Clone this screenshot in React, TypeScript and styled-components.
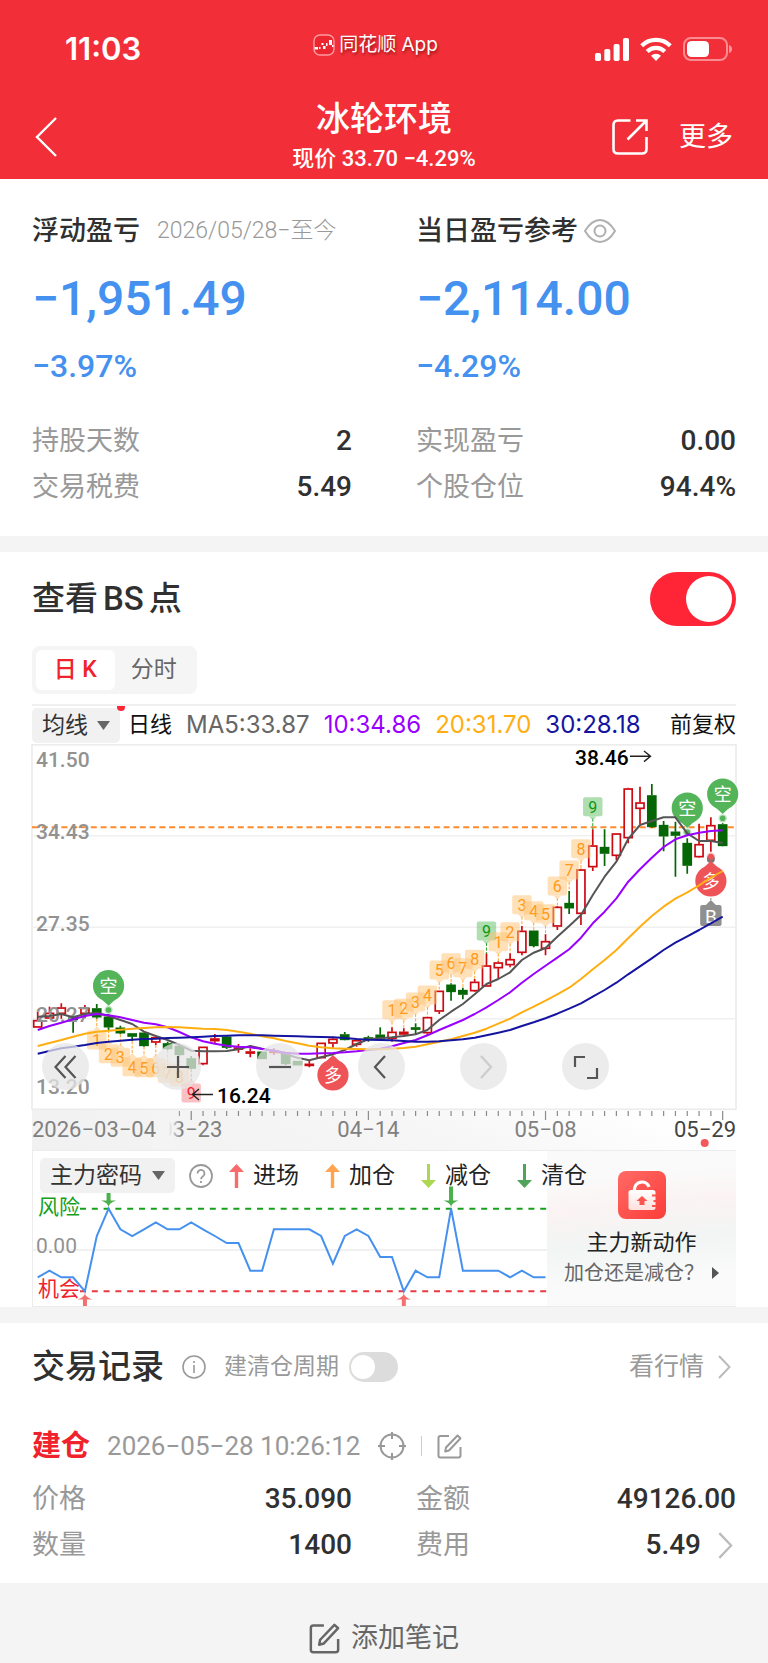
import React from "react";
import styled, { createGlobalStyle } from "styled-components";

const GlobalStyle = createGlobalStyle`
  *, *::before, *::after { box-sizing: border-box; }
  body {
    margin: 0;
    background: #f4f4f4;
    color: #303030;
    font-family: Roboto, "Noto Sans CJK SC", sans-serif;
    font-size: 27px;
  }
  h1, h2, p, dl, dt, dd { margin: 0; }
  button, select, input { font: inherit; color: inherit; margin: 0; }
  button { border: 0; padding: 0; background: none; }
  a { color: inherit; text-decoration: none; }
  svg { display: block; flex: none; }
`;

/* ---------- header ---------- */

const Header = styled.header`
  height: 179px;
  background: #f22f38;
  color: #fff;
`;

const StatusBar = styled.div`
  display: grid;
  grid-template-columns: 1fr auto 1fr;
  align-items: center;
  height: 88px;
  padding: 10px 36px 0 65px;
`;

const Clock = styled.time`
  font-family: Inter, sans-serif;
  font-size: 31px;
  font-weight: 600;
  line-height: 36px;
`;

const AppBadge = styled.div`
  display: flex;
  align-items: center;
  gap: 4px;
  height: 52px;
  margin-right: 46px;
  padding-bottom: 8px;
  font-family: Inter, "Noto Sans CJK SC", sans-serif;
  font-size: 19px;
  line-height: 28px;
  text-shadow: 1px 2px 3px rgba(90, 0, 0, 0.6);
`;

const StatusIcons = styled.div`
  display: flex;
  align-items: center;
  justify-content: flex-end;
  gap: 11px;
`;

const NavBar = styled.div`
  display: grid;
  grid-template-columns: 1fr auto 1fr;
  align-items: center;
  height: 91px;
  padding: 6px 35px 0;
`;

const StockTitle = styled.div`
  text-align: center;
`;

const StockName = styled.h1`
  font-size: 34px;
  font-weight: 500;
  line-height: 48px;
`;

const StockPrice = styled.p`
  font-size: 22px;
  font-weight: 500;
  line-height: 32px;
  padding-bottom: 4px;
`;

const NavActions = styled.div`
  display: flex;
  align-items: center;
  justify-content: flex-end;
  gap: 31px;
`;

const MoreButton = styled.button`
  font-size: 27px;
  line-height: 40px;
`;

/* ---------- shared ---------- */

const Section = styled.section`
  padding: 0 32px;
  margin-bottom: 16px;
  background: #fff;
`;

const Columns = styled.div`
  display: grid;
  grid-template-columns: 1fr 1fr;
  column-gap: 64px;
`;

const DataRow = styled.div`
  display: flex;
  align-items: center;
  justify-content: space-between;
  height: 46px;
`;

const DataLabel = styled.dt`
  color: #999;
  line-height: 40px;
`;

const DataValue = styled.dd`
  display: flex;
  align-items: center;
  gap: 14px;
  font-size: 28px;
  font-weight: 500;
  line-height: 40px;
`;

const SectionTitle = styled.h2`
  display: flex;
  gap: 5px;
  font-size: 33px;
  font-weight: 500;
  line-height: 48px;
`;

const Switch = styled.input<{ $w: number; $h: number; $knob: number; $pad: number }>`
  appearance: none;
  display: flex;
  align-items: center;
  flex: none;
  width: ${(p) => p.$w}px;
  height: ${(p) => p.$h}px;
  padding: 0 ${(p) => p.$pad}px;
  border-radius: ${(p) => p.$h}px;
  background: #dcdcdc;
  &::before {
    content: "";
    width: ${(p) => p.$knob}px;
    height: ${(p) => p.$knob}px;
    border-radius: 50%;
    background: #fff;
  }
  &:checked {
    background: #ff2436;
    justify-content: flex-end;
  }
`;

/* ---------- profit summary ---------- */

const Summary = styled(Section)`
  padding-top: 32px;
  padding-bottom: 26px;
`;

const ProfitHead = styled.div<{ $gap: number }>`
  display: flex;
  align-items: center;
  height: 40px;
  gap: ${(p) => p.$gap}px;
`;

const ProfitTitle = styled.h2`
  font-size: 27px;
  font-weight: 500;
  line-height: 40px;
`;

const DateRange = styled.span`
  color: #999;
  font-size: 23px;
  font-weight: 300;
  line-height: 32px;
`;

const ProfitAmount = styled.p`
  color: #4591f0;
  font-size: 48px;
  font-weight: 500;
  line-height: 64px;
  margin-top: 16px;
`;

const ProfitPercent = styled.p`
  color: #4591f0;
  font-size: 32px;
  font-weight: 500;
  line-height: 40px;
  margin: 15px 0 32px;
`;

/* ---------- chart ---------- */

const ChartSection = styled(Section)`
  padding-top: 20px;
`;

const TitleRow = styled.div`
  display: flex;
  align-items: center;
  justify-content: space-between;
  height: 54px;
`;

const Tabs = styled.div`
  display: flex;
  width: 165px;
  height: 48px;
  margin-top: 20px;
  padding: 4px;
  border-radius: 8px;
  background: #f5f5f5;
`;

const Tab = styled.button<{ $active?: boolean }>`
  flex: 1;
  border-radius: 6px;
  background: ${(p) => (p.$active ? "#fff" : "transparent")};
  color: ${(p) => (p.$active ? "#f0222c" : "#666")};
  font-size: 23px;
  font-weight: ${(p) => (p.$active ? 500 : 400)};
  line-height: 32px;
`;

const LegendRow = styled.div`
  display: flex;
  align-items: center;
  gap: 14px;
  height: 40px;
  margin-top: 10px;
  border-top: 2px solid #f0f0f0;
  font-size: 22px;
  line-height: 32px;
  color: #111;
`;

const PeriodGroup = styled.div`
  display: flex;
  align-items: center;
  gap: 8px;
`;

const Dropdown = styled.div<{ $w: number }>`
  position: relative;
  flex: none;
  width: ${(p) => p.$w}px;
  height: 35px;
  select {
    appearance: none;
    width: 100%;
    height: 100%;
    padding: 0 0 0 10px;
    border: 0;
    border-radius: 5px;
    background: #f1f1f1;
    color: #333;
    font-size: 23px;
    line-height: 35px;
  }
  svg {
    position: absolute;
    right: 10px;
    top: 13px;
    pointer-events: none;
  }
`;

const NewDot = styled.i`
  position: absolute;
  right: -5px;
  top: -2px;
  width: 8px;
  height: 5px;
  border-radius: 0 0 5px 5px;
  background: #ff2436;
`;

const MaText = styled.span<{ $color: string }>`
  color: ${(p) => p.$color};
  font-family: Inter, sans-serif;
  font-size: 24px;
`;

const LegendEnd = styled.span`
  margin-left: auto;
`;

const ChartBox = styled.div`
  position: relative;
  svg.plot { width: 100%; height: auto; overflow: visible; }
`;

const ChartControls = styled.div`
  position: absolute;
  left: 10px;
  bottom: 60px;
  display: flex;
  gap: 55px;
`;

const RoundButton = styled.button`
  display: grid;
  place-items: center;
  width: 47px;
  height: 47px;
  border-radius: 50%;
  background: rgba(230, 230, 230, 0.75);
  &:first-child { margin-right: 10px; }
`;

const Indicator = styled.div`
  position: relative;
  display: flex;
  border: 1px solid #ececec;
  border-width: 1px 0 1px 1px;
  svg.line { flex: 1 1 0; min-width: 0; height: auto; }
`;

const IndicatorLegend = styled.div`
  position: absolute;
  left: 7px;
  top: 7px;
  display: flex;
  align-items: center;
  gap: 16px;
  height: 35px;
  font-size: 23px;
  line-height: 34px;
  color: #222;
`;

const Signals = styled.div`
  display: flex;
  gap: 26px;
`;

const SignalItem = styled.span`
  display: flex;
  align-items: center;
  gap: 9px;
`;

const HelpGroup = styled.div`
  display: flex;
  align-items: center;
  gap: 14px;
`;

const Promo = styled.a`
  display: flex;
  flex-direction: column;
  align-items: center;
  width: 189px;
  padding-top: 20px;
  background: linear-gradient(175deg, #fafafa 18%, #fbf3f3 36%, #f1f5f4 58%, #fafafa 80%);
  color: #222;
  font-size: 22px;
  line-height: 32px;
`;

const PromoTitle = styled.span`
  margin-top: 8px;
`;

const PromoHint = styled.span`
  display: flex;
  align-items: center;
  gap: 8px;
  color: #666;
  font-size: 20px;
  line-height: 28px;
`;

/* ---------- trades ---------- */

const Trades = styled(Section)`
  padding-top: 20px;
  padding-bottom: 15px;
  margin-bottom: 0;
`;

const TradesHead = styled.div`
  display: flex;
  align-items: center;
  height: 48px;
`;

const InfoIcon = styled.span`
  margin: 0 18px;
`;

const CycleLabel = styled.label`
  display: flex;
  align-items: center;
  gap: 10px;
  color: #999;
  font-size: 23px;
  line-height: 32px;
`;

const QuoteLink = styled.a`
  display: flex;
  align-items: center;
  gap: 14px;
  margin-left: auto;
  padding-right: 5px;
  color: #999;
  font-size: 25px;
  line-height: 36px;
`;

const TradeHead = styled.div`
  display: flex;
  align-items: center;
  height: 40px;
  margin: 35px 0 10px;
  color: #999;
`;

const TradeKind = styled.strong`
  color: #f0222c;
  font-size: 29px;
  font-weight: 700;
  line-height: 40px;
`;

const TradeTime = styled.time`
  margin: 0 18px 0 17px;
  font-size: 26px;
  line-height: 40px;
`;

const Separator = styled.i`
  width: 1px;
  height: 20px;
  margin: 0 15px;
  background: #ccc;
`;

const NoteBar = styled.footer`
  display: flex;
  justify-content: center;
  padding: 32px 0 2px;
  color: #666;
`;

const NoteButton = styled.button`
  display: flex;
  align-items: center;
  gap: 11px;
  line-height: 46px;
`;

/* ---------- chart data ---------- */

const STEP = 11.81;
const cx = (i: number) => 5.7 + STEP * i;
const cy = (v: number) => 196 + v / 3;

// [rising, high, bodyTop, bodyBottom, low]
const CANDLES: [number, number, number, number, number][] = [
  [1, 215, 240, 263, 263], [1, 200, 218, 236, 236], [1, 190, 202, 222, 236], [0, 230, 232, 240, 278],
  [1, 195, 203, 222, 235], [0, 192, 205, 232, 236], [0, 222, 230, 262, 270], [0, 257, 263, 280, 283],
  [0, 280, 280, 290, 303], [0, 278, 278, 318, 320], [1, 287, 291, 308, 315], [0, 305, 310, 327, 330],
  [0, 316, 318, 345, 347], [0, 348, 355, 386, 388], [1, 320, 320, 373, 376], [1, 282, 295, 304, 310],
  [0, 288, 290, 323, 327], [1, 312, 322, 328, 338], [1, 325, 334, 340, 352], [0, 335, 335, 357, 357],
  [1, 325, 332, 338, 345], [0, 338, 342, 372, 375], [0, 363, 363, 376, 376], [1, 362, 371, 376, 382],
  [1, 308, 308, 355, 355], [1, 290, 296, 311, 323], [0, 276, 283, 300, 301], [1, 297, 300, 315, 320],
  [0, 287, 292, 298, 305], [0, 262, 284, 298, 298], [1, 262, 275, 297, 305], [1, 265, 275, 284, 290],
  [0, 250, 262, 268, 282], [1, 231, 231, 280, 285], [1, 152, 152, 215, 222], [0, 130, 134, 156, 182],
  [0, 143, 150, 164, 178], [1, 117, 125, 154, 156], [1, 40, 76, 140, 141], [1, 64, 67, 85, 115],
  [1, 40, 57, 76, 82], [1, -42, -28, 39, 46], [0, -28, -28, 18, 22], [1, -17, 3, 27, 46],
  [1, -102, -100, -40, -30], [0, -147, -111, -95, -78], [1, -214, -212, -78, -45], [1, -332, -284, -218, -207],
  [0, -332, -279, -259, -222], [1, -321, -320, -252, -239], [1, -457, -455, -305, -290], [1, -460, -413, -393, -347],
  [0, -468, -434, -339, -337], [0, -357, -345, -311, -266], [0, -355, -325, -313, -190], [0, -305, -291, -223, -199],
  [1, -349, -288, -248, -247], [1, -368, -345, -297, -265], [0, -350, -347, -282, -281],
];

const MA = [
  { color: "#555", v: [230, 228, 222, 232, 222, 218, 228, 240, 252, 275, 288, 300, 315, 332, 334, 334, 333, 328, 318, 326, 332, 343, 353, 361, 352, 343, 330, 312, 298, 295, 292, 288, 283, 270, 240, 215, 192, 163, 132, 117, 97, 60, 38, 24, -10, -42, -75, -135, -190, -235, -303, -345, -357, -368, -368, -320, -297, -297, -291] },
  { color: "#9a00ff", v: [270, 258, 248, 238, 228, 222, 226, 232, 240, 248, 253, 262, 276, 292, 304, 311, 317, 320, 322, 327, 332, 338, 341, 341, 340, 339, 337, 334, 330, 326, 319, 309, 300, 286, 270, 255, 240, 222, 202, 180, 157, 128, 102, 77, 53, 28, -7, -50, -85, -125, -175, -212, -247, -279, -302, -314, -322, -327, -329] },
  { color: "#ffae12", v: [318, 309, 300, 290, 281, 275, 272, 269, 266, 264, 262, 261, 262, 264, 266, 267, 270, 275, 281, 289, 295, 303, 310, 317, 322, 325, 326, 327, 328, 328, 326, 324, 320, 313, 305, 298, 288, 278, 266, 251, 236, 217, 200, 182, 163, 143, 117, 88, 60, 30, -5, -40, -72, -100, -124, -143, -164, -187, -207] },
  { color: "#1414a0", v: [341, 333, 325, 320, 315, 309, 305, 302, 299, 297, 296, 294, 293, 292, 290, 288, 287, 286, 286, 286, 287, 288, 289, 290, 291, 292, 294, 297, 299, 300, 301, 303, 305, 305, 304, 301, 298, 293, 286, 278, 270, 258, 247, 235, 221, 206, 190, 170, 150, 128, 103, 79, 55, 30, 8, -11, -30, -50, -70] },
];

type Tone = "orange" | "green" | "red";
// [candle, number, centre, tone]
const TAGS: [number, number, number, Tone][] = [
  [5, 1, 300, "orange"], [6, 2, 341, "orange"], [7, 3, 352, "orange"], [8, 4, 380, "orange"],
  [9, 5, 383, "orange"], [10, 6, 383, "orange"], [11, 7, 400, "orange"], [12, 8, 411, "orange"], [13, 9, 459, "red"],
  [30, 1, 209, "orange"], [31, 2, 205, "orange"], [32, 3, 186, "orange"], [33, 4, 165, "orange"],
  [34, 5, 90, "orange"], [35, 6, 68, "orange"], [36, 7, 83, "orange"], [37, 8, 58, "orange"], [38, 9, -27, "green"],
  [39, 1, 5, "orange"], [40, 2, -25, "orange"], [41, 3, -106, "orange"], [42, 4, -88, "orange"], [43, 5, -79, "orange"],
  [44, 6, -162, "orange"], [45, 7, -210, "orange"], [46, 8, -274, "orange"], [47, 9, -400, "green"],
];
const TONES: Record<Tone, { fill: string; text: string }> = {
  orange: { fill: "#ffc476", text: "#ff9a1a" },
  green: { fill: "#68c06a", text: "#0a9a10" },
  red: { fill: "#f78a92", text: "#f0222c" },
};

const PRICES: [string, number][] = [["41.50", 23], ["34.43", 95], ["27.35", 187], ["20.27", 278], ["13.20", 350]];
const FORCE = [412, 392, 412, 412, 454, 288, 206, 268, 288, 268, 247, 268, 268, 247, 268, 288, 309, 309, 392, 392, 268, 268, 268, 268, 288, 371, 288, 268, 288, 351, 351, 454, 392, 412, 412, 206, 392, 392, 392, 392, 412, 392, 412, 412];

const poly = (v: number[], y: (n: number) => number) =>
  v.map((n, i) => `${cx(i).toFixed(1)},${y(n).toFixed(1)}`).join(" ");

/* ---------- drawings ---------- */

const Candle = ({ i }: { i: number }) => {
  const [up, hi, top, bot, lo] = CANDLES[i];
  const x = cx(i);
  const c = up ? "#cc0a12" : "#056605";
  const bodyH = Math.max((bot - top) / 3, 2);
  return (
    <g stroke={c} strokeWidth="1.7" fill={up ? "#fff" : c}>
      <path d={`M${x} ${cy(hi)}V${cy(top)}M${x} ${cy(bot)}V${cy(lo)}`} />
      <rect x={x - 4} y={cy(top) + 0.7} width="8" height={Math.max(bodyH - 1.4, 1)} />
    </g>
  );
};

const Tag = ({ i, n, v, tone }: { i: number; n: number; v: number; tone: Tone }) => {
  const x = cx(i);
  const y = cy(v);
  const t = TONES[tone];
  const below = i < 20;
  const [, hi, , , lo] = CANDLES[i];
  return (
    <g>
      <path
        d={below ? `M${x} ${cy(lo)}V${y - 12}` : `M${x} ${y + 12}V${cy(hi)}`}
        stroke={t.text} strokeDasharray="3 1.5" opacity="0.9"
      />
      <g fill={t.fill} opacity="0.52">
        <rect x={x - 9.7} y={y - 9.5} width="19.4" height="19" rx="2" />
        <path d={below ? `M${x - 4} ${y - 9.5}l4-4 4 4z` : `M${x - 4} ${y + 9.5}l4 4 4-4z`} />
      </g>
      <text x={x} y={y + 6} textAnchor="middle" fontSize="16" fill={t.text}>{n}</text>
    </g>
  );
};

const Pin = ({ i, v, dot, short }: { i: number; v: number; dot?: number; short?: boolean }) => {
  const x = cx(i);
  const y = cy(v);
  const c = short ? "#54b45a" : "#ee5357";
  const s = short ? 1 : -1;
  return (
    <g fill={c}>
      <circle cx={x} cy={y} r="15.6" />
      <path d={`M${x - 7} ${y + s * 13.5}L${x} ${y + s * 20}L${x + 7} ${y + s * 13.5}z`} />
      {dot !== undefined && (
        <>
          <circle cx={x} cy={cy(dot)} r="4.2" opacity="0.35" />
          <circle cx={x} cy={cy(dot)} r="2.8" />
        </>
      )}
      <text x={x} y={y + 7} textAnchor="middle" fontSize="18" fill="#fff">{short ? "空" : "多"}</text>
    </g>
  );
};

const PriceChart = () => (
  <svg className="plot" viewBox="0 0 704 406" role="img" aria-label="日K">
    <defs>
      <linearGradient id="axis" x1="0" x2="1" y1="1" y2="0.86">
        <stop offset="0" stopColor="#f1f1f1" />
        <stop offset="0.6" stopColor="#f6f6f6" />
        <stop offset="1" stopColor="#fff" />
      </linearGradient>
      <linearGradient id="fade">
        <stop offset="0.55" stopColor="#f4f4f4" />
        <stop offset="1" stopColor="#f4f4f4" stopOpacity="0" />
      </linearGradient>
    </defs>
    <rect y="365" width="704" height="41" fill="url(#axis)" />
    <g stroke="#ececec" strokeWidth="1.6" fill="none">
      <rect x="0" y="0.8" width="704" height="364.5" />
      <path d="M0 91.7H704M0 183.3H704M0 274.7H704" stroke="#f0f0f0" />
    </g>
    <path d="M0 83.3H704" stroke="#ff8a2b" strokeWidth="2" strokeDasharray="6 3.8" />
    {CANDLES.map((_, i) => <Candle key={i} i={i} />)}
    <g fontSize="21" fontWeight="500" fill="#929292">
      {PRICES.map(([t, y]) => <text key={t} x="4" y={y}>{t}</text>)}
    </g>
    {TAGS.map(([i, n, v, tone]) => <Tag key={i} i={i} n={n} v={v} tone={tone} />)}
    <Pin i={6} v={137} dot={210} short />
    <Pin i={25} v={405} />
    <Pin i={55} v={-396} dot={-323} short />
    <Pin i={58} v={-438} dot={-365} short />
    <circle cx={cx(57)} cy="115" r="4" fill="#777" />
    <Pin i={57} v={-177} dot={-250} />
    <path d={`M${cx(57)} 154v7`} stroke="#888" strokeDasharray="2 2" />
    <g fill="#8f8f8f">
      <rect x={cx(57) - 10.7} y="161" width="21.4" height="21" rx="2" />
      <path d={`M${cx(57) - 5} 161l5-5 5 5z`} />
    </g>
    <text x={cx(57)} y="178.5" textAnchor="middle" fontSize="19" fill="#fff">B</text>
    {MA.map((m) => (
      <polyline key={m.color} points={poly(m.v, cy)} fill="none" stroke={m.color} strokeWidth="2" strokeLinejoin="round" />
    ))}
    <g fontSize="21" fontWeight="500" fill="#000">
      <text x="543" y="21">38.46</text>
      <text x="185" y="359">16.24</text>
    </g>
    <g fill="none" stroke="#222" strokeWidth="1.4">
      <path d="M598 12.3H618M612 7l6.5 5.3-6.5 5.3" />
      <path d="M181 350.5H161M167 345l-6.5 5.5 6.5 5.5" />
    </g>
    <path
      d={CANDLES.map((_, i) => (i < 11 ? "" : `M${cx(i)} 367v${(i - 13) % 15 ? 5 : 9}`)).join("")}
      stroke="#8a8a8a" strokeWidth="1.2"
    />
    <g fontSize="22" fill="#808080">
      <text x={cx(13)} y="393" textAnchor="middle">03−23</text>
      <rect x="120" y="367" width="30" height="38" fill="url(#fade)" />
      <text x="0" y="393">2026−03−04</text>
      <text x={cx(28)} y="393" textAnchor="middle">04−14</text>
      <text x={cx(43)} y="393" textAnchor="middle">05−08</text>
      <text x="704" y="393" textAnchor="end" fill="#444">05−29</text>
    </g>
    <circle cx="672.7" cy="399" r="4" fill="#f4585c" />
  </svg>
);

const fy = (n: number) => n / 3 - 11;

const SignalMark = ({ i, up }: { i: number; up?: boolean }) => {
  const x = cx(i);
  return up ? (
    <path d={`M${x - 7.5} 148.5q7.5-2.5 7.5-7q0 4.5 7.5 7h-5.5v7.5h-4v-7.5z`} fill="#f4706f" />
  ) : (
    <path d={`M${x - 7.5} 49.5q7.5 2.5 7.5 7q0-4.5 7.5-7h-5.5V35.5h-4v14z`} fill="#4ab04c" />
  );
};

const ForceChart = () => (
  <svg className="line" viewBox="1 0 514 155" role="img" aria-label="主力密码">
    <path d="M0 99H515" stroke="#ececec" strokeWidth="1.6" />
    <path d="M48 57.7H515" stroke="#16a01c" strokeWidth="2" strokeDasharray="6 5.8" />
    <path d="M48 140.3H515" stroke="#e93a42" strokeWidth="2" strokeDasharray="6 5.8" />
    <text x="6" y="63" fontSize="21" fill="#16a01c">风险</text>
    <text x="4" y="102" fontSize="21" fill="#929292">0.00</text>
    <text x="6" y="145" fontSize="21" fill="#f0222c">机会</text>
    <polyline points={poly(FORCE, fy)} fill="none" stroke="#4591f0" strokeWidth="2" />
    <SignalMark i={6} />
    <SignalMark i={35} />
    <SignalMark i={4} up />
    <SignalMark i={31} up />
  </svg>
);

const Caret = () => (
  <svg width="13" height="9" viewBox="0 0 13 9"><path d="M0 0h13L6.5 9z" fill="#666" /></svg>
);

const Chevron = ({ w = 13, h = 24, color = "#bbb" }) => (
  <svg width={w} height={h} viewBox="0 0 13 24" fill="none" stroke={color} strokeWidth="2">
    <path d="M1 1l10.5 11L1 23" />
  </svg>
);

const EditIcon = ({ size = 25, sw = 2 }) => (
  <svg width={size} height={size} viewBox="0 0 25 25" fill="none" stroke="currentColor" strokeWidth={sw} strokeLinejoin="round">
    <path d="M12 2H3.5Q1.5 2 1.5 4v17.5q0 2 2 2h18q2 0 2-2V13" />
    <path d="M20.5 1.5l3 2.7L12 16.5l-3.8 1 .8-4z" />
  </svg>
);

const SignalArrow = ({ color, up }: { color: string; up?: boolean }) => (
  <svg width="15" height="24" viewBox="0 0 15 24" fill={color}>
    {up ? <path d="M7.5 0L15 8H9.2v16H5.8V8H0z" /> : <path d="M7.5 24L15 16H9V0H6v16H0z" />}
  </svg>
);

const SIGNALS = [
  { label: "进场", color: "#f76b6b", up: true },
  { label: "加仓", color: "#ffa552", up: true },
  { label: "减仓", color: "#add652", up: false },
  { label: "清仓", color: "#52a35a", up: false },
];

const ctl = { width: 26, height: 26, viewBox: "0 0 26 26", fill: "none", strokeWidth: 2.2 };

const Data = ({ label, value, more }: { label: string; value: string; more?: boolean }) => (
  <DataRow>
    <DataLabel>{label}</DataLabel>
    <DataValue>
      {value}
      {more && <Chevron w={21} h={27} />}
    </DataValue>
  </DataRow>
);

export default function App() {
  return (
    <>
      <GlobalStyle />
      <Header>
        <StatusBar>
          <Clock>11:03</Clock>
          <AppBadge>
            <svg width="22" height="22" viewBox="0 0 22 22">
              <rect x="1" y="1" width="20" height="20" rx="6" fill="#ec2630" stroke="#ff9ba0" strokeWidth="1.4" />
              <path d="M1.5 13h3.500v2.500h-3.500zM6 13h1.500v2H6zM8.500 9h2v2h-2zM10 12h2.500v3H10zM13 9h1.500v3H13zM16 6h3v5h-3zM19 11h1.500v2H19z" fill="#fff" />
            </svg>
            同花顺 App
          </AppBadge>
          <StatusIcons>
            <svg width="34" height="23" viewBox="0 0 34 23" fill="#fff">
              <rect y="15" width="6" height="8" rx="1.8" />
              <rect x="9.3" y="11" width="6" height="12" rx="1.8" />
              <rect x="18.6" y="6" width="6" height="17" rx="1.8" />
              <rect x="28" width="6" height="23" rx="1.8" />
            </svg>
            <svg width="32" height="24" viewBox="0 0 32 24" fill="none" stroke="#fff" strokeWidth="4.2">
              <path d="M1.7 8.7a20.5 20.5 0 0 1 28.6 0" />
              <path d="M7.2 14.5a12.5 12.5 0 0 1 17.6 0" />
              <path d="M16 24l-5-5.3a7.5 7.5 0 0 1 10 0z" fill="#fff" stroke="none" />
            </svg>
            <svg width="49" height="24" viewBox="0 0 49 24">
              <rect x="1" y="1" width="43" height="22" rx="7" fill="none" stroke="#fff" strokeOpacity="0.45" strokeWidth="2" />
              <rect x="4" y="4" width="22" height="16" rx="4.5" fill="#fff" />
              <path d="M46 8q3 1 3 4t-3 4z" fill="#fff" fillOpacity="0.5" />
            </svg>
          </StatusIcons>
        </StatusBar>
        <NavBar>
          <button aria-label="返回">
            <svg width="22" height="40" viewBox="0 0 22 40" fill="none" stroke="#fff" strokeWidth="2.4">
              <path d="M21 1L2 20l19 19" />
            </svg>
          </button>
          <StockTitle>
            <StockName>冰轮环境</StockName>
            <StockPrice>现价 33.70 −4.29%</StockPrice>
          </StockTitle>
          <NavActions>
            <button aria-label="分享">
              <svg width="36" height="36" viewBox="0 0 36 36" fill="none" stroke="#fff" strokeWidth="2.6">
                <path d="M18.5 1.5H6Q1.5 1.5 1.5 6v24q0 4.5 4.5 4.5h24q4.5 0 4.5-4.5V18" />
                <path d="M24 1.5h10.5V12M34 2L15.5 20.5" />
              </svg>
            </button>
            <MoreButton>更多</MoreButton>
          </NavActions>
        </NavBar>
      </Header>

      <main>
        <Summary>
          <Columns>
            <div>
              <ProfitHead $gap={17}>
                <ProfitTitle>浮动盈亏</ProfitTitle>
                <DateRange>2026/05/28−至今</DateRange>
              </ProfitHead>
              <ProfitAmount>−1,951.49</ProfitAmount>
              <ProfitPercent>−3.97%</ProfitPercent>
              <dl>
                <Data label="持股天数" value="2" />
                <Data label="交易税费" value="5.49" />
              </dl>
            </div>
            <div>
              <ProfitHead $gap={6}>
                <ProfitTitle>当日盈亏参考</ProfitTitle>
                <button aria-label="隐藏金额">
                  <svg width="32" height="24" viewBox="0 0 32 24" fill="none" stroke="#b0b0b0" strokeWidth="2">
                    <path d="M1 12Q7.5 1 16 1t15 11q-6.5 11-15 11T1 12z" />
                    <circle cx="16" cy="12" r="5.5" />
                  </svg>
                </button>
              </ProfitHead>
              <ProfitAmount>−2,114.00</ProfitAmount>
              <ProfitPercent>−4.29%</ProfitPercent>
              <dl>
                <Data label="实现盈亏" value="0.00" />
                <Data label="个股仓位" value="94.4%" />
              </dl>
            </div>
          </Columns>
        </Summary>

        <ChartSection>
          <TitleRow>
            <SectionTitle as="label" htmlFor="bs">
              <span>查看</span>
              <span>BS</span>
              <span>点</span>
            </SectionTitle>
            <Switch id="bs" type="checkbox" role="switch" defaultChecked $w={86} $h={54} $knob={46} $pad={4} />
          </TitleRow>
          <Tabs role="tablist">
            <Tab role="tab" aria-selected $active>日 K</Tab>
            <Tab role="tab">分时</Tab>
          </Tabs>
          <LegendRow>
            <PeriodGroup>
              <Dropdown $w={88}>
                <select aria-label="指标"><option>均线</option></select>
                <Caret />
                <NewDot />
              </Dropdown>
              日线
            </PeriodGroup>
            <MaText $color="#666">MA5:33.87</MaText>
            <MaText $color="#9a00ff">10:34.86</MaText>
            <MaText $color="#ffae12">20:31.70</MaText>
            <MaText $color="#1414a0">30:28.18</MaText>
            <LegendEnd>前复权</LegendEnd>
          </LegendRow>
          <ChartBox>
            <PriceChart />
            <ChartControls>
              <RoundButton aria-label="最早">
                <svg {...ctl} stroke="#555"><path d="M12.5 2L2.5 13l10 11M22.5 2l-10 11 10 11" /></svg>
              </RoundButton>
              <RoundButton aria-label="放大">
                <svg {...ctl} stroke="#555"><path d="M13 2v22M2 13h22" /></svg>
              </RoundButton>
              <RoundButton aria-label="缩小">
                <svg {...ctl} stroke="#555"><path d="M2 13h22" /></svg>
              </RoundButton>
              <RoundButton aria-label="向前">
                <svg {...ctl} stroke="#555"><path d="M16 2L6 13l10 11" /></svg>
              </RoundButton>
              <RoundButton aria-label="向后">
                <svg {...ctl} stroke="#ccc"><path d="M10 2l10 11-10 11" /></svg>
              </RoundButton>
              <RoundButton aria-label="全屏">
                <svg {...ctl} stroke="#555"><path d="M2 13V3h10M14 24h10V14" /></svg>
              </RoundButton>
            </ChartControls>
          </ChartBox>
          <Indicator>
            <ForceChart />
            <Promo href="#force">
              <svg width="48" height="48" viewBox="0 0 48 48">
                <defs>
                  <linearGradient id="lock" x2="1" y2="1">
                    <stop stopColor="#ff6a66" />
                    <stop offset="1" stopColor="#fb3d38" />
                  </linearGradient>
                  <linearGradient id="body" x2="0" y2="1">
                    <stop stopColor="#fff" />
                    <stop offset="1" stopColor="#ffe0dc" />
                  </linearGradient>
                </defs>
                <rect width="48" height="48" rx="8" fill="url(#lock)" />
                <path d="M16.5 20v-2.5a7.5 7.5 0 0 1 14.5-1.5" fill="none" stroke="#fff" strokeWidth="3.2" />
                <rect x="10.5" y="19" width="27" height="20" rx="2.5" fill="url(#body)" />
                <path d="M24 25l5.5 5h-3v4h-5v-4h-3zM34 23.5h4v2h-4zM35.5 29h2.5v2h-2.5zM34 34h4v2h-4z" fill="#fb5550" />
              </svg>
              <PromoTitle>主力新动作</PromoTitle>
              <PromoHint>
                加仓还是减仓？
                <svg width="7" height="12" viewBox="0 0 7 12"><path d="M0 0l7 6-7 6z" fill="#555" /></svg>
              </PromoHint>
            </Promo>
            <IndicatorLegend>
              <HelpGroup>
                <Dropdown $w={135}>
                  <select aria-label="副图指标"><option>主力密码</option></select>
                  <Caret />
                </Dropdown>
                <button aria-label="说明">
                  <svg width="24" height="24" viewBox="0 0 24 24" fill="none" stroke="#999" strokeWidth="1.8">
                    <circle cx="12" cy="12" r="11" />
                    <path d="M8.5 9.5a3.5 3.5 0 1 1 5.5 2.8q-2 1.2-2 3M12 17v2" />
                  </svg>
                </button>
              </HelpGroup>
              <Signals>
                {SIGNALS.map((s) => (
                  <SignalItem key={s.label}>
                    <SignalArrow color={s.color} up={s.up} />
                    {s.label}
                  </SignalItem>
                ))}
              </Signals>
            </IndicatorLegend>
          </Indicator>
        </ChartSection>

        <Trades>
          <TradesHead>
            <SectionTitle>交易记录</SectionTitle>
            <InfoIcon>
              <svg width="24" height="24" viewBox="0 0 24 24" fill="none" stroke="#999" strokeWidth="1.6">
                <circle cx="12" cy="12" r="11" />
                <path d="M12 10v8M12 6v2" />
              </svg>
            </InfoIcon>
            <CycleLabel>
              建清仓周期
              <Switch type="checkbox" role="switch" $w={49} $h={30} $knob={24} $pad={2} />
            </CycleLabel>
            <QuoteLink href="#quote">
              看行情
              <Chevron />
            </QuoteLink>
          </TradesHead>
          <TradeHead>
            <TradeKind>建仓</TradeKind>
            <TradeTime>2026−05−28 10:26:12</TradeTime>
            <button aria-label="定位">
              <svg width="28" height="28" viewBox="0 0 28 28" fill="none" stroke="#999" strokeWidth="2">
                <circle cx="14" cy="14" r="11.5" />
                <path d="M14 0v7M14 21v7M0 14h7M21 14h7" />
              </svg>
            </button>
            <Separator />
            <button aria-label="编辑"><EditIcon /></button>
          </TradeHead>
          <Columns as="dl">
            <Data label="价格" value="35.090" />
            <Data label="金额" value="49126.00" />
            <Data label="数量" value="1400" />
            <Data label="费用" value="5.49" more />
          </Columns>
        </Trades>
      </main>

      <NoteBar>
        <NoteButton>
          <EditIcon size={31} />
          添加笔记
        </NoteButton>
      </NoteBar>
    </>
  );
}
